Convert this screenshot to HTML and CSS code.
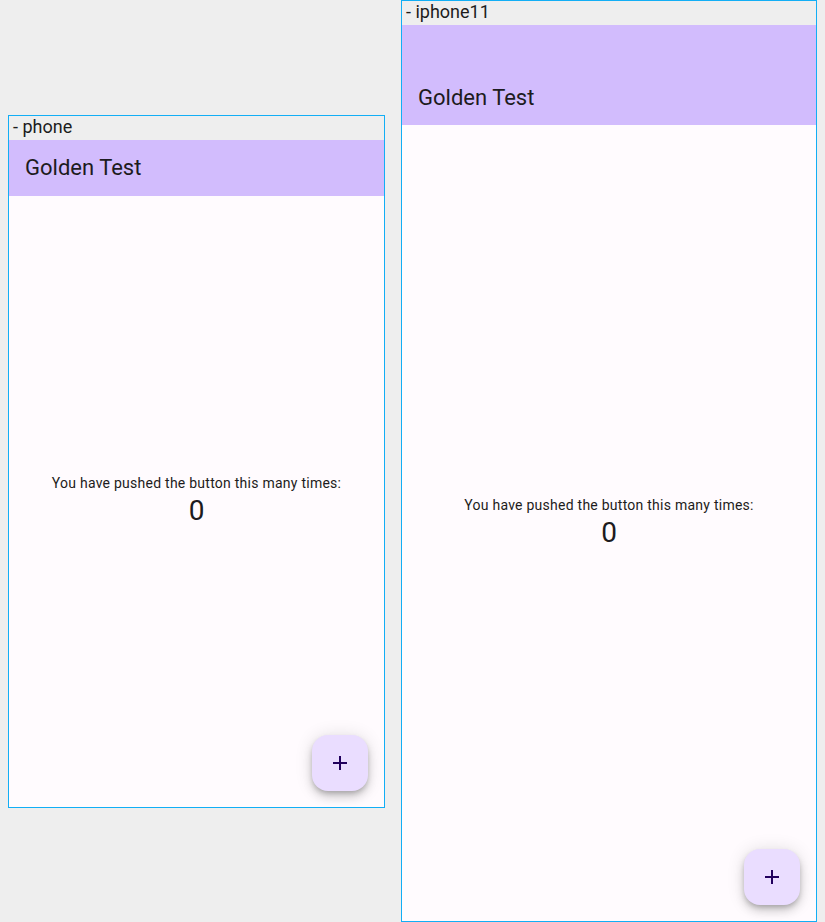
FILE: index.html
```html
<!DOCTYPE html>
<html>
<head>
<meta charset="utf-8">
<link rel="stylesheet" href="styles.css">
</head>
<body>
<div class="stage">
  <div class="device">
    <div class="device-label">- phone</div>
    <div class="screen screen-phone">
      <div class="appbar"><div class="toolbar">Golden Test</div></div>
      <div class="content">
        <div class="msg">You have pushed the button this many times:</div>
        <div class="count">0</div>
      </div>
      <div class="fab">
        <svg width="24" height="24" viewBox="0 0 24 24"><path d="M19 13h-6v6h-2v-6H5v-2h6V5h2v6h6v2z" fill="#21005d"/></svg>
      </div>
    </div>
  </div>
  <div class="device">
    <div class="device-label">- iphone11</div>
    <div class="screen screen-iphone">
      <div class="appbar appbar-notch"><div class="toolbar">Golden Test</div></div>
      <div class="content">
        <div class="msg">You have pushed the button this many times:</div>
        <div class="count">0</div>
      </div>
      <div class="fab">
        <svg width="24" height="24" viewBox="0 0 24 24"><path d="M19 13h-6v6h-2v-6H5v-2h6V5h2v6h6v2z" fill="#21005d"/></svg>
      </div>
    </div>
  </div>
</div>
</body>
</html>
```

FILE: styles.css
```css
html, body {
  margin: 0;
  padding: 0;
  background: #eeeeee;
  font-family: Roboto, "Liberation Sans", sans-serif;
}

.stage {
  display: flex;
  align-items: center;
  gap: 16px;
  padding-left: 8px;
  height: 922px;
}

.device {
  display: flex;
  flex-direction: column;
  border: 1px solid #12aef5;
}

.device-label {
  height: 24px;
  line-height: 22px;
  padding-left: 4px;
  font-size: 18px;
  color: #1c1c1c;
  background: #eeeeee;
}

.screen {
  position: relative;
  display: flex;
  flex-direction: column;
  background: #fffbfe;
  overflow: hidden;
}

.screen-phone {
  width: 375px;
  height: 667px;
}

.screen-iphone {
  width: 414px;
  height: 896px;
}

.appbar {
  background: #d2bcfd;
}

.appbar-notch {
  padding-top: 44px;
}

.toolbar {
  height: 56px;
  display: flex;
  align-items: center;
  padding-left: 16px;
  font-size: 22px;
  color: #1d1b20;
}

.content {
  flex: 1;
  display: flex;
  flex-direction: column;
  align-items: center;
  justify-content: center;
  color: #1d1b20;
}

.msg {
  font-size: 14px;
  line-height: 20px;
  letter-spacing: 0.25px;
}

.count {
  font-size: 28px;
  line-height: 36px;
}

.fab {
  position: absolute;
  right: 16px;
  bottom: 16px;
  width: 56px;
  height: 56px;
  border-radius: 16px;
  background: #eaddff;
  display: flex;
  align-items: center;
  justify-content: center;
  box-shadow: 0 3px 5px -1px rgba(0,0,0,0.2), 0 6px 10px 0 rgba(0,0,0,0.14), 0 1px 18px 0 rgba(0,0,0,0.12);
}
```
